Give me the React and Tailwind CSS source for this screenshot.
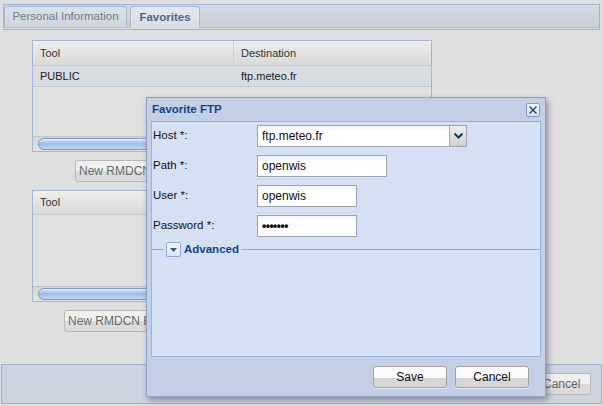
import React from "react";

const FONT = { fontFamily: '"Liberation Sans", Arial, sans-serif' };

function GridHeader({ cols, h = "h-[25px]" }) {
  return (
    <div className={`flex ${h} border-b border-[#c9c9c9] bg-gradient-to-b from-[#ededed] to-[#d9d9d9] text-[11px] text-[#333]`}>
      {cols.map((c, i) => (
        <div
          key={c.label}
          className={`flex items-center px-[7px] ${i < cols.length - 1 ? "border-r border-[#cfcfcf]" : ""}`}
          style={{ width: c.w }}
        >
          {c.label}
        </div>
      ))}
    </div>
  );
}

function Scrollbar() {
  return (
    <div className="h-[15px] border-t border-[#c4c4c4] bg-gradient-to-b from-[#d6d6d6] to-[#e2e2e2] px-[5px] py-[1px]">
      <div className="h-[12px] rounded-full border border-[#7d98c4] bg-gradient-to-b from-[#d7e5f7] via-[#9dbde6] to-[#c2d8f2] shadow-[inset_0_1px_0_rgba(255,255,255,0.6)]" />
    </div>
  );
}

function GrayButton({ children, className = "" }) {
  return (
    <button className={`h-[22px] overflow-hidden whitespace-nowrap rounded-[3px] border border-[#b9b9b9] bg-gradient-to-b from-[#f0f0f0] from-50% to-[#dadada] to-50% px-[3px] text-left text-[12px] text-[#6a6a6a] ${className}`}>
      {children}
    </button>
  );
}

function MacButton({ children }) {
  return (
    <button className="h-[22px] w-[74px] rounded-[3px] border border-[#a4a4a4] bg-gradient-to-b from-[#fbfbfb] from-55% to-[#d6d6d6] to-55% text-[12px] text-[#111] shadow-[0_1px_0_rgba(255,255,255,0.6)]">
      {children}
    </button>
  );
}

function Field({ label, children }) {
  return (
    <div className="flex h-[30px] items-start">
      <div className="w-[105px] pt-[2px] pl-[1px] text-[11.5px] text-[#111]">{label}</div>
      {children}
    </div>
  );
}

function TextInput({ value, w, password }) {
  return (
    <div
      className="flex h-[22px] items-center border border-[#9ea4b0] bg-gradient-to-b from-[#f4f4f4] to-white to-30% px-[4px] text-[12px] text-[#111]"
      style={{ width: w }}
    >
      {password ? <span className="text-[12px] font-bold leading-none tracking-[-0.5px]">•••••••</span> : value}
    </div>
  );
}

export default function App() {
  return (
    <div className="relative h-[406px] w-[603px] overflow-hidden bg-[#dfdfdf]" style={FONT}>
      {/* Tab strip */}
      <div className="px-[3px] pt-[4px]">
        <div className="border border-[#a3b5d6] bg-gradient-to-b from-[#d3d9e2] to-[#c7ced9]">
          <div className="flex h-[22px] items-end gap-[3px]">
            <div className="flex h-[21px] w-[123px] items-center justify-center rounded-t-[4px] border border-b-0 border-[#a9b8d2] bg-gradient-to-b from-[#dde2ea] to-[#cdd4de] text-[11.5px] text-[#707b8c]">
              Personal Information
            </div>
            <div className="relative -mb-[1px] flex h-[22px] w-[70px] items-center justify-center rounded-t-[4px] border border-b-0 border-[#a9b8d2] bg-gradient-to-b from-[#e4e8ee] to-[#d8dde6] text-[11.5px] font-bold text-[#536487]">
              Favorites
            </div>
          </div>
          <div className="h-[2px] border-t border-[#b5c2d8] bg-[#d8dde6]" />
        </div>
      </div>

      {/* Grid 1 */}
      <div className="ml-[32px] mt-[10px] flex h-[112px] w-[400px] flex-col border border-[#a6b6d2] bg-[#e0e0e0]">
        <GridHeader cols={[{ label: "Tool", w: 201 }, { label: "Destination", w: 197 }]} />
        <div className="flex h-[21px] border-b border-dotted border-[#b0b4bc] bg-[#d8dce3] text-[11px] text-[#222]">
          <div className="flex w-[201px] items-center px-[7px]">PUBLIC</div>
          <div className="flex items-center px-[7px]">ftp.meteo.fr</div>
        </div>
        <div className="flex-1" />
        <Scrollbar />
      </div>
      <div className="ml-[75px] mt-[8px] flex">
        <GrayButton className="w-[110px]">New RMDCN Entry</GrayButton>
      </div>

      {/* Grid 2 */}
      <div className="ml-[32px] mt-[8px] flex h-[112px] w-[400px] flex-col border border-[#a6b6d2] bg-[#e0e0e0]">
        <GridHeader h="h-[24px]" cols={[{ label: "Tool", w: 201 }, { label: "Destination", w: 197 }]} />
        <div className="flex-1" />
        <Scrollbar />
      </div>
      <div className="ml-[64px] mt-[8px] flex">
        <GrayButton className="w-[130px]">New RMDCN Entry</GrayButton>
      </div>

      {/* Bottom bar */}
      <div className="absolute left-[1px] top-[364px] flex h-[40px] w-[601px] items-center justify-end gap-[8px] border border-[#9fb2d6] bg-[#cbd3df] pr-[10px]">
        <GrayButton className="w-[70px] text-center text-[#666]">Save</GrayButton>
        <GrayButton className="w-[52px] text-center text-[#666]">Cancel</GrayButton>
      </div>

      {/* Dialog */}
      <div className="absolute left-[146px] top-[97px] flex h-[300px] w-[400px] flex-col border border-[#8ea2c6] bg-[#c2cfe4] shadow-[2px_3px_6px_rgba(0,0,0,0.35)]">
        <div className="flex h-[23px] items-center justify-between px-[5px]">
          <div className="text-[11.5px] font-bold text-[#15428b]">Favorite FTP</div>
          <div className="flex h-[14px] w-[14px] items-center justify-center rounded-[2px] border border-[#7c9ad0] bg-gradient-to-b from-[#f2f6fc] to-[#d5e1f3]">
            <svg width="10" height="10" viewBox="0 0 10 10">
              <path d="M1.5 1.5 L8.5 8.5 M8.5 1.5 L1.5 8.5" stroke="#15428b" strokeWidth="1.4" />
            </svg>
          </div>
        </div>
        <div className="mx-[4px] flex h-[236px] flex-col border border-[#98b3e3] bg-[#d5e1f3] pt-[3px]">
          <Field label="Host *:">
            <div className="flex h-[22px] w-[210px] border border-[#9ea4b0]">
              <div className="flex flex-1 items-center bg-gradient-to-b from-[#f4f4f4] to-white to-30% px-[4px] text-[12px] text-[#111]">
                ftp.meteo.fr
              </div>
              <div className="flex w-[17px] items-center justify-center border-l border-[#a8a8a8] bg-gradient-to-b from-[#efefef] to-[#cfcfcf]">
                <svg width="9" height="6" viewBox="0 0 9 6">
                  <path d="M0.5 0.5 L4.5 4.5 L8.5 0.5" fill="none" stroke="#1c3566" strokeWidth="2" />
                </svg>
              </div>
            </div>
          </Field>
          <Field label="Path *:">
            <TextInput value="openwis" w={130} />
          </Field>
          <Field label="User *:">
            <TextInput value="openwis" w={100} />
          </Field>
          <Field label="Password *:">
            <TextInput password w={100} />
          </Field>
          <div className="-mt-[4px] flex h-[17px] items-center">
            <div className="h-px w-[12px] bg-[#a3aabd]" />
            <div className="ml-[2px] flex h-[15px] w-[15px] items-center justify-center rounded-[2px] border border-[#8fa9d6] bg-gradient-to-b from-[#f5f8fd] to-[#dde7f5]">
              <svg width="7" height="4" viewBox="0 0 7 4">
                <path d="M0 0 L7 0 L3.5 4 Z" fill="#2f5aa8" />
              </svg>
            </div>
            <div className="ml-[3px] text-[11.5px] font-bold text-[#15428b]">Advanced</div>
            <div className="ml-[2px] h-px flex-1 bg-[#a3aabd]" />
          </div>
        </div>
        <div className="flex flex-1 items-center justify-end gap-[8px] pr-[16px]">
          <MacButton>Save</MacButton>
          <MacButton>Cancel</MacButton>
        </div>
      </div>
    </div>
  );
}
